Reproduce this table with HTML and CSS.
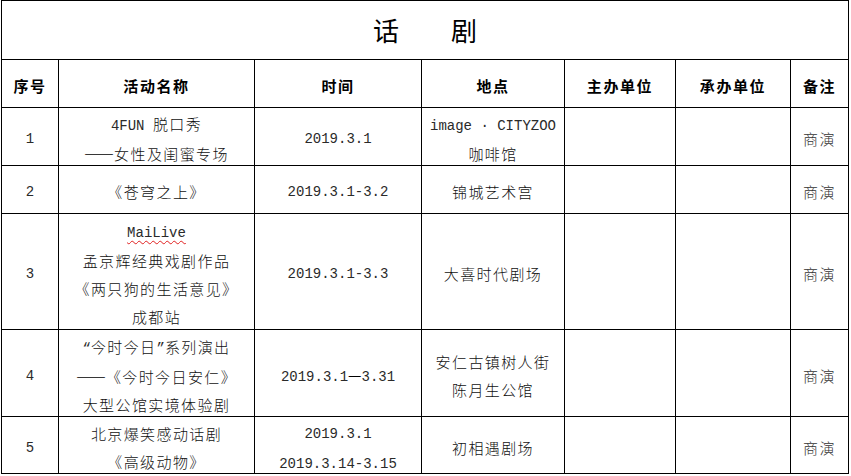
FILE: index.html
```html
<!DOCTYPE html>
<html lang="zh-CN">
<head>
<meta charset="utf-8">
<title>话剧</title>
<link rel="stylesheet" href="styles.css">
</head>
<body>
<div class="sheet">
  <div class="cell title">话　　剧</div>

  <div class="cell head">序号</div>
  <div class="cell head">活动名称</div>
  <div class="cell head">时间</div>
  <div class="cell head">地点</div>
  <div class="cell head">主办单位</div>
  <div class="cell head">承办单位</div>
  <div class="cell head">备注</div>

  <div class="cell"><span class="lat">1</span></div>
  <div class="cell"><div><span class="lat">4FUN </span>脱口秀</div><div><span class="dash">——</span>女性及闺蜜专场</div></div>
  <div class="cell"><span class="lat">2019.3.1</span></div>
  <div class="cell"><div><span class="lat">image · CITYZOO</span></div><div>咖啡馆</div></div>
  <div class="cell"></div>
  <div class="cell"></div>
  <div class="cell note">商演</div>

  <div class="cell"><span class="lat">2</span></div>
  <div class="cell">《苍穹之上》</div>
  <div class="cell"><span class="lat">2019.3.1-3.2</span></div>
  <div class="cell">锦城艺术宫</div>
  <div class="cell"></div>
  <div class="cell"></div>
  <div class="cell note">商演</div>

  <div class="cell"><span class="lat">3</span></div>
  <div class="cell"><div><span class="lat squiggle">MaiLive</span></div><div>孟京辉经典戏剧作品</div><div>《两只狗的生活意见》</div><div>成都站</div></div>
  <div class="cell"><span class="lat">2019.3.1-3.3</span></div>
  <div class="cell">大喜时代剧场</div>
  <div class="cell"></div>
  <div class="cell"></div>
  <div class="cell note">商演</div>

  <div class="cell"><span class="lat">4</span></div>
  <div class="cell"><div><span class="lat">“</span>今时今日<span class="lat">”</span>系列演出</div><div><span class="dash">——</span>《今时今日安仁》</div><div>大型公馆实境体验剧</div></div>
  <div class="cell"><div><span class="lat">2019.3.1</span><span class="dash">—</span><span class="lat">3.31</span></div></div>
  <div class="cell"><div>安仁古镇树人街</div><div>陈月生公馆</div></div>
  <div class="cell"></div>
  <div class="cell"></div>
  <div class="cell note">商演</div>

  <div class="cell"><span class="lat">5</span></div>
  <div class="cell"><div>北京爆笑感动话剧</div><div>《高级动物》</div></div>
  <div class="cell"><div><span class="lat">2019.3.1</span></div><div><span class="lat">2019.3.14-3.15</span></div></div>
  <div class="cell">初相遇剧场</div>
  <div class="cell"></div>
  <div class="cell"></div>
  <div class="cell note">商演</div>
</div>
</body>
</html>
```
FILE: styles.css
```css
html, body {
  margin: 0;
  background: #ffffff;
}
body {
  padding: 0 0 0 1px;
  font-family: "Noto Sans CJK SC", sans-serif;
  color: #111111;
}
.sheet {
  display: grid;
  width: max-content;
  grid-template-columns: 56px 195px 166px 142px 110px 114px 57px;
  grid-template-rows: 58px 47px 57px 47px 115px 86px 56px;
  gap: 1px;
  padding: 1px;
  background: #000000;
}
.cell {
  background: #ffffff;
  display: flex;
  flex-direction: column;
  justify-content: center;
  align-items: center;
  text-align: center;
  font-size: 15px;
  font-weight: 300;
  letter-spacing: 1.4px;
  line-height: 28px;
  padding-top: 5px;
  white-space: nowrap;
}
.title {
  grid-column: 1 / -1;
  font-size: 26px;
  font-weight: 400;
  letter-spacing: 0;
  color: #000000;
  padding-top: 0;
}
.head {
  font-weight: 700;
  color: #000000;
  letter-spacing: 1.6px;
}
.lat {
  font-family: "Liberation Mono", monospace;
  font-size: 14px;
  letter-spacing: 0;
  color: #2a2a2a;
}
.dash {
  letter-spacing: 0;
  font-weight: 400;
  color: #000000;
}
.squiggle {
  text-decoration: underline wavy #e02020;
  text-decoration-thickness: 1px;
  text-underline-offset: 3px;
}
.note {
  color: #333333;
}
```
